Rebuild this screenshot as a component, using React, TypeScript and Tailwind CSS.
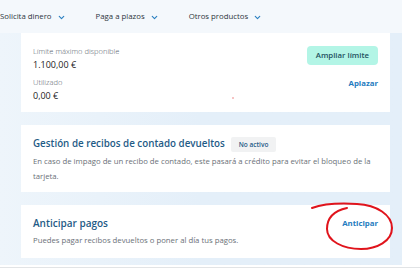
import { ChevronDown } from "lucide-react";

const font = { fontFamily: '"Open Sans", "Liberation Sans", sans-serif' };

function NavItem({ label }: { label: string }) {
  return (
    <div className="flex items-center gap-[5px]">
      <span className="text-[7.8px] text-[#2d3640]">{label}</span>
      <ChevronDown className="h-[9px] w-[9px] text-[#2a7fc1]" strokeWidth={3} />
    </div>
  );
}

export default function App() {
  return (
    <div className="w-[420px] h-[270px] bg-white overflow-hidden" style={font}>
      <div className="w-[402px]">
        {/* menu superior */}
        <div className="h-[33px] bg-[#f4f8fc] flex items-center gap-[30px] pt-[1px]">
          <NavItem label="Solicita dinero" />
          <NavItem label="Paga a plazos" />
          <NavItem label="Otros productos" />
        </div>

        {/* tarjetas */}
        <div className="bg-gradient-to-r from-[#eef5fb] via-[#e4eff9] to-[#e4eff9] pl-[21px] pr-[12px] pb-[7px] flex flex-col gap-[13px]">
          <div className="h-[79px] bg-white px-[12px] pt-[13px] flex justify-between relative">
            <div className="flex flex-col">
              <span className="text-[7.5px] font-light text-[#55606a] leading-[10px]">Límite máximo disponible</span>
              <span className="text-[9px] text-[#222] leading-[12px] mt-[3px]">1.100,00 €</span>
              <span className="text-[7.5px] font-light text-[#55606a] leading-[10px] mt-[6px]">Utilizado</span>
              <span className="text-[9px] text-[#222] leading-[12px] mt-[3px]">0,00 €</span>
            </div>
            <div className="flex flex-col items-end">
              <button className="h-[19px] px-[9px] rounded-[4px] bg-[#b3f5e6] text-[7.8px] font-semibold text-[#22505f]">
                Ampliar límite
              </button>
              <span className="text-[7.8px] font-bold text-[#1f7cc0] mt-[13px]">Aplazar</span>
            </div>
            <span className="absolute left-[211px] top-[64px] w-[2px] h-[2px] rounded-full bg-[#f3b0b0]" />
          </div>

          <div className="h-[67px] bg-white px-[12px] pt-[12px]">
            <div className="flex items-center gap-[6px]">
              <span className="text-[9.8px] font-semibold text-[#1f5b86]">Gestión de recibos de contado devueltos</span>
              <span className="h-[15px] px-[8px] bg-[#f1f2f3] rounded-[2px] text-[6.5px] font-semibold text-[#1f5b86] flex items-center">
                No activo
              </span>
            </div>
            <p className="text-[7.75px] text-[#6b7178] leading-[15px] mt-[2px]">
              En caso de impago de un recibo de contado, este pasará a crédito para evitar el bloqueo de la tarjeta.
            </p>
          </div>

          <div className="h-[53px] bg-white px-[12px] pt-[10px] flex justify-between relative">
            <div>
              <div className="text-[10px] font-semibold text-[#1f5b86] leading-[16px]">Anticipar pagos</div>
              <div className="text-[7.75px] text-[#6b7178] leading-[14px] mt-[2px]">
                Puedes pagar recibos devueltos o poner al día tus pagos.
              </div>
            </div>
            <span className="text-[7.8px] font-bold text-[#1f7cc0] mt-[3px]">Anticipar</span>
            <svg
              className="absolute left-[290px] top-[-4px]"
              width="84"
              height="52"
              viewBox="0 0 84 52"
              fill="none"
            >
              <path
                d="M1 7 C 12 3, 30 2, 46 3 C 66 4, 81 14, 81 27 C 81 40, 66 48, 50 48 C 32 48, 16 40, 16 28 C 16 18, 22 10, 36 7"
                stroke="#e0141c"
                strokeWidth="2"
                strokeLinecap="round"
              />
            </svg>
          </div>
        </div>
      </div>
      <div className="h-[1px] bg-[#e2e4e6] mt-[2px]" />
    </div>
  );
}
